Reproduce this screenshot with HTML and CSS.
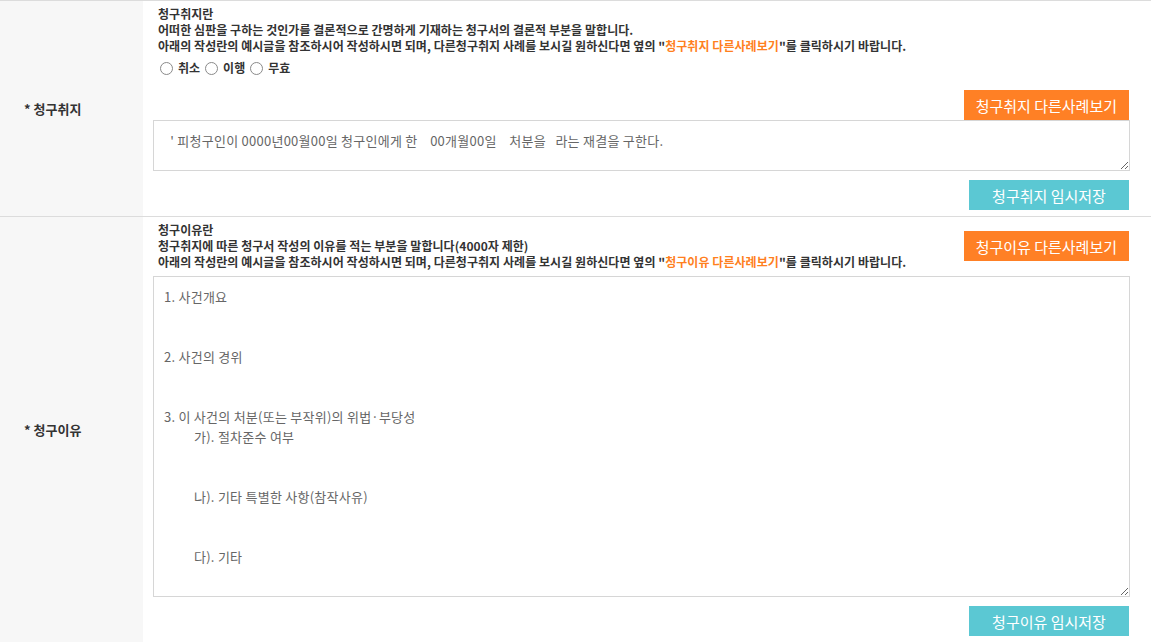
FILE: index.html
```html
<!DOCTYPE html>
<html>
	<head>
		<meta charset="utf-8">
		<link rel="stylesheet" href="styles.css">
	</head>
	<body>
		<div class="form">
			<div class="row">
				<div class="label">* 청구취지</div>
				<div class="cell">
					<div class="guide">
						<p>청구취지란</p>
						<p>어떠한 심판을 구하는 것인가를 결론적으로 간명하게 기재하는 청구서의 결론적 부분을 말합니다.</p>
						<p>아래의 작성란의 예시글을 참조하시어 작성하시면 되며, 다른청구취지 사례를 보시길 원하신다면 옆의 "<em>청구취지 다른사례보기</em>"를 클릭하시기 바랍니다.</p>
					</div>
					<div class="radios">
						<label><input type="radio" name="kind"> 취소</label>
						<label><input type="radio" name="kind"> 이행</label>
						<label><input type="radio" name="kind"> 무효</label>
					</div>
					<div class="buttons"><button class="btn orange">청구취지 다른사례보기</button></div>
					<textarea class="purpose">  ' 피청구인이 0000년00월00일 청구인에게 한    00개월00일    처분을   라는 재결을 구한다.</textarea>
					<div class="buttons save"><button class="btn teal">청구취지 임시저장</button></div>
				</div>
			</div>
			<div class="row">
				<div class="label">* 청구이유</div>
				<div class="cell">
					<div class="head">
						<div class="guide">
							<p>청구이유란</p>
							<p>청구취지에 따른 청구서 작성의 이유를 적는 부분을 말합니다(4000자 제한)</p>
							<p>아래의 작성란의 예시글을 참조하시어 작성하시면 되며, 다른청구취지 사례를 보시길 원하신다면 옆의 "<em>청구이유 다른사례보기</em>"를 클릭하시기 바랍니다.</p>
						</div>
						<button class="btn orange">청구이유 다른사례보기</button>
					</div>
					<textarea class="reason">1. 사건개요


2. 사건의 경위


3. 이 사건의 처분(또는 부작위)의 위법·부당성
	가). 절차준수 여부


	나). 기타 특별한 사항(참작사유)


	다). 기타</textarea>
					<div class="buttons save"><button class="btn teal">청구이유 임시저장</button></div>
				</div>
			</div>
		</div>
	</body>
</html>
```

FILE: styles.css
```css
body {
	margin: 0;
	padding: 0;
	background-color: #fff;
	font-family: "Noto Sans CJK KR", "Noto Sans", sans-serif;
	color: #333;
	overflow: hidden;
}
.form {
	border-top: 1px solid #dcdcdc;
}
.row {
	display: grid;
	grid-template-columns: 143px 1fr;
	border-bottom: 1px solid #dcdcdc;
}
.label {
	display: flex;
	align-items: center;
	padding-left: 24px;
	background-color: #f7f7f7;
	font-size: 13px;
	font-weight: bold;
	color: #333;
}
.cell {
	padding: 5px 21px 6px 10px;
}
.guide {
	padding-left: 5px;
	font-size: 12px;
	font-weight: bold;
	line-height: 16px;
	letter-spacing: 0.05px;
	color: #333;
}
.guide p {
	margin: 0;
}
.guide em {
	font-style: normal;
	color: #ff7f1e;
}
.radios {
	display: flex;
	gap: 5px;
	height: 20px;
	margin-top: 4px;
	padding-left: 7px;
	font-size: 12px;
	font-weight: bold;
	line-height: 20px;
}
.radios label {
	display: flex;
	align-items: center;
	gap: 5px;
}
.radios input {
	appearance: none;
	width: 13px;
	height: 13px;
	margin: 0;
	border: 1px solid #8a8a8a;
	border-radius: 50%;
	background-color: #fff;
}
.buttons {
	display: flex;
	justify-content: flex-end;
	padding-right: 1px;
	margin-top: 12px;
}
.buttons.save {
	margin-top: 9px;
}
.btn {
	height: 30px;
	padding: 0 12px;
	border: none;
	font-family: "Noto Sans CJK KR", sans-serif;
	font-size: 15px;
	color: #fff;
	cursor: pointer;
}
.orange {
	background-color: #ff8025;
}
.teal {
	width: 160px;
	background-color: #5bc8d3;
}
textarea {
	display: block;
	box-sizing: border-box;
	width: 100%;
	padding: 10px 10px;
	border: 1px solid #d6d6d6;
	font-family: "Noto Sans CJK KR", sans-serif;
	font-size: 13px;
	line-height: 20px;
	letter-spacing: 0.25px;
	color: #666;
	tab-size: 30px;
	outline: none;
}
.purpose {
	height: 51px;
}
.head {
	display: flex;
	align-items: center;
	justify-content: space-between;
	padding-right: 1px;
}
.reason {
	height: 321px;
	margin-top: 6px;
}
```
